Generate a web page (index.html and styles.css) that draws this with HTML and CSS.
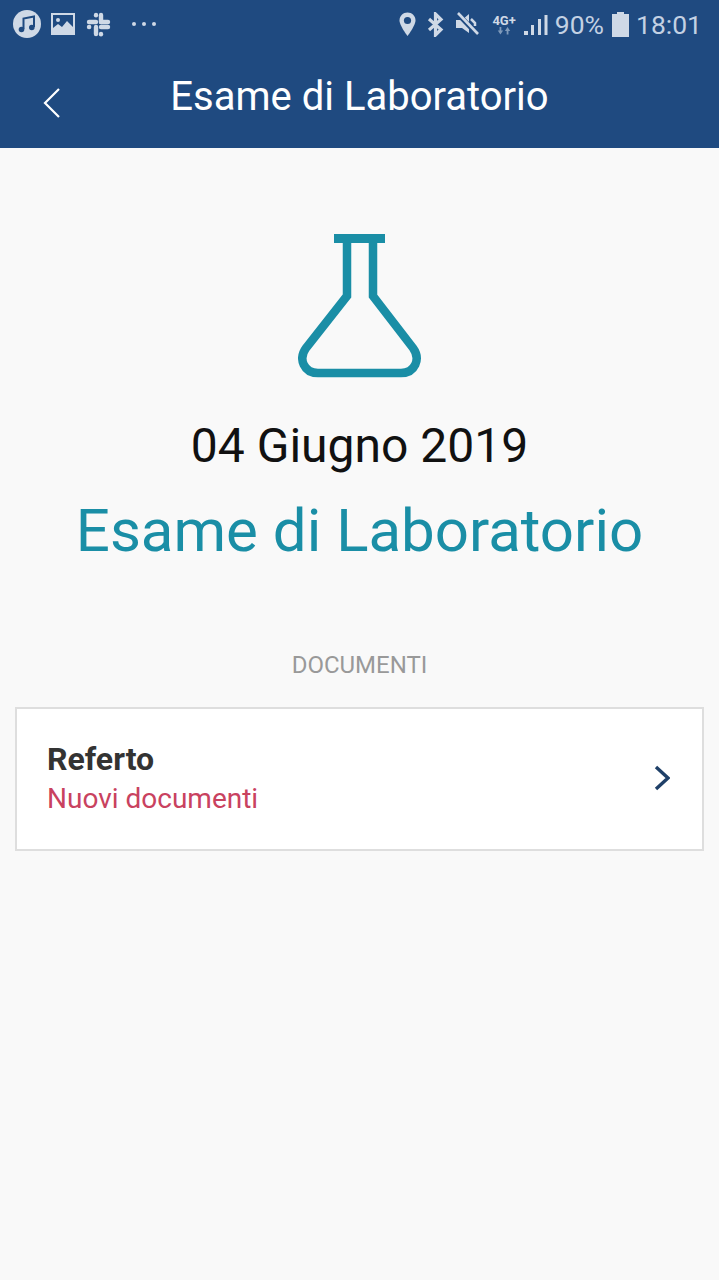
FILE: index.html
```html
<!DOCTYPE html>
<html lang="it">
<head>
    <meta charset="UTF-8">
    <meta name="viewport" content="width=device-width, initial-scale=1.0">
    <title>Esame di Laboratorio</title>
    <link rel="stylesheet" href="styles.css">
</head>
<body>
    <header class="app-header">
        <div class="status-bar">
            <div class="status-left">
                <svg class="icon-music" width="30" height="30" viewBox="0 0 30 30">
                    <circle cx="15" cy="15" r="14" fill="#cfd9e6"/>
                    <path d="M11.5 20V9.5L22 7.5V18" fill="none" stroke="#1f4a80" stroke-width="2"/>
                    <circle cx="9.5" cy="20.5" r="2.8" fill="#1f4a80"/>
                    <circle cx="19.8" cy="18.5" r="2.8" fill="#1f4a80"/>
                </svg>
                <svg class="icon-image" width="24" height="22" viewBox="0 0 24 22">
                    <rect width="24" height="22" fill="#cfd9e6"/>
                    <rect x="2" y="2" width="20" height="18" fill="#1f4a80"/>
                    <path d="M2 20V15L7 11L11 14L16 8L22 14V20Z" fill="#cfd9e6"/>
                    <circle cx="7" cy="7" r="2" fill="#cfd9e6"/>
                </svg>
                <svg class="icon-slack" width="25" height="25" viewBox="0 0 25 25" fill="none" stroke="#cfd9e6" stroke-width="4.4" stroke-linecap="round">
                    <path d="M15 3V10"/>
                    <path d="M15 10H22"/>
                    <path d="M3 10H10"/>
                    <path d="M10 3V3.2"/>
                    <path d="M10 15V22"/>
                    <path d="M3 15H3.2"/>
                    <path d="M15 15H22"/>
                    <path d="M15 22V22.2"/>
                </svg>
                <div class="more-dots"><span></span><span></span><span></span></div>
            </div>
            <div class="status-right">
                <svg width="17" height="25" viewBox="0 0 17 25">
                    <path d="M8.5 0.5C4 0.5 0.5 4 0.5 8.5C0.5 13.5 8.5 24 8.5 24C8.5 24 16.5 13.5 16.5 8.5C16.5 4 13 0.5 8.5 0.5Z" fill="#cfd9e6"/>
                    <circle cx="8.5" cy="8.5" r="3.6" fill="#1f4a80"/>
                </svg>
                <svg class="icon-bt" width="17" height="25" viewBox="0 0 17 25">
                    <path d="M2 7L14 17.5L8.5 23V2L14 7.5L2 18" fill="none" stroke="#cfd9e6" stroke-width="3.2"/>
                </svg>
                <svg class="icon-mute" width="24" height="24" viewBox="0 0 24 24">
                    <path d="M1 8H7L14 2V21L7 16H1Z" fill="#cfd9e6"/>
                    <path d="M16 7L20 11V14" fill="none" stroke="#cfd9e6" stroke-width="2.5"/>
                    <path d="M2 1L23 23" stroke="#1f4a80" stroke-width="5"/>
                    <path d="M3 1L23 22" stroke="#cfd9e6" stroke-width="2.6"/>
                </svg>
                <div class="network">
                    <span class="network-label">4G+</span>
                    <svg width="14" height="8" viewBox="0 0 14 9" fill="#7f9aba">
                        <path d="M2 0H4V4H6L3 8.5L0 4H2Z"/>
                        <path d="M10 8.5H12V4.5H14L11 0L8 4.5H10Z"/>
                    </svg>
                </div>
                <svg class="icon-signal" width="24" height="24" viewBox="0 0 24 24" fill="#cfd9e6">
                    <rect x="0" y="19" width="4" height="4"/>
                    <rect x="7" y="13" width="3" height="10"/>
                    <rect x="14" y="7" width="3" height="16"/>
                    <rect x="20.5" y="3" width="3" height="20"/>
                </svg>
                <span class="status-text status-level">90%</span>
                <svg class="icon-battery" width="17" height="25" viewBox="0 0 17 25" fill="#cfd9e6">
                    <path d="M5 0H12V2H17V25H0V2H5Z"/>
                </svg>
                <span class="status-text status-time">18:01</span>
            </div>
        </div>
        <div class="title-bar">
            <svg class="back-icon" width="18" height="32" viewBox="0 0 18 32">
                <path d="M16 2L2 16L16 30" fill="none" stroke="#fff" stroke-width="2.2"/>
            </svg>
            <h1>Esame di Laboratorio</h1>
        </div>
    </header>

    <main class="content">
        <svg class="flask" width="124" height="144" viewBox="0 0 124 144">
            <path d="M36 4.5H87" fill="none" stroke="#1a8ea6" stroke-width="9"/>
            <path d="M49 4V62L8 114C0 125 6 139 20 139H103C117 139 123 125 115 114L75 62V4" fill="none" stroke="#1a8ea6" stroke-width="8.5"/>
        </svg>
        <div class="exam-date">04 Giugno 2019</div>
        <div class="exam-title">Esame di Laboratorio</div>
        <div class="section-label">DOCUMENTI</div>
        <div class="doc-card">
            <div class="doc-info">
                <div class="doc-name">Referto</div>
                <div class="doc-status">Nuovi documenti</div>
            </div>
            <svg class="doc-arrow" width="16" height="26" viewBox="0 0 16 26">
                <path d="M2 2L14 13L2 24" fill="none" stroke="#1f4068" stroke-width="3.4"/>
            </svg>
        </div>
    </main>
</body>
</html>
```

FILE: styles.css
```css
body {
    margin: 0;
    height: 1280px;
    overflow: hidden;
    background-color: #f9f9f9;
    font-family: Roboto, "Liberation Sans", sans-serif;
}

.app-header {
    height: 148px;
    background-color: #1f4a80;
    color: #fff;
}

.status-bar {
    height: 48px;
    display: flex;
    justify-content: space-between;
    align-items: center;
    padding: 0 17px 0 12px;
}

.status-left, .status-right {
    display: flex;
    align-items: center;
}

.icon-image {
    margin-left: 9px;
}

.icon-slack {
    margin-left: 11px;
}

.more-dots {
    display: flex;
    gap: 6px;
    margin-left: 21px;
}

.more-dots span {
    width: 4px;
    height: 4px;
    border-radius: 50%;
    background-color: #cfd9e6;
}

.icon-bt {
    margin-left: 11px;
}

.icon-mute {
    margin-left: 11px;
}

.network {
    display: flex;
    flex-direction: column;
    align-items: center;
    margin-left: 13px;
    color: #cfd9e6;
}

.network-label {
    font-size: 13px;
    font-weight: 700;
    line-height: 13px;
}

.icon-signal {
    margin-left: 8px;
}

.status-text {
    font-size: 26.5px;
    color: #c3d1e3;
}

.status-level {
    margin-left: 7px;
}

.icon-battery {
    margin-left: 8px;
}

.status-time {
    margin-left: 7px;
}

.title-bar {
    height: 100px;
    display: flex;
    align-items: center;
    justify-content: center;
    position: relative;
}

.title-bar h1 {
    margin: 0 0 4px;
    font-size: 40px;
    font-weight: 400;
}

.back-icon {
    position: absolute;
    left: 43px;
    top: 39px;
}

.content {
    display: flex;
    flex-direction: column;
    align-items: center;
    padding: 86px 15px 0;
}

.exam-date {
    margin-top: 41px;
    font-size: 48px;
    line-height: 54px;
    color: #111;
}

.exam-title {
    margin-top: 23px;
    font-size: 60px;
    line-height: 70px;
    color: #1a8ea6;
}

.section-label {
    margin-top: 86px;
    font-size: 24px;
    line-height: 26px;
    color: #999;
}

.doc-card {
    align-self: stretch;
    box-sizing: border-box;
    height: 144px;
    margin-top: 29px;
    padding: 0 32px 0 30px;
    display: flex;
    justify-content: space-between;
    align-items: center;
    background-color: #fff;
    border: 2px solid #dedede;
}

.doc-arrow {
    margin-bottom: 2px;
}

.doc-name {
    font-size: 32px;
    font-weight: 700;
    line-height: 36px;
    color: #333;
}

.doc-status {
    font-size: 28px;
    line-height: 36px;
    margin-top: 4px;
    color: #c9425f;
}
```
